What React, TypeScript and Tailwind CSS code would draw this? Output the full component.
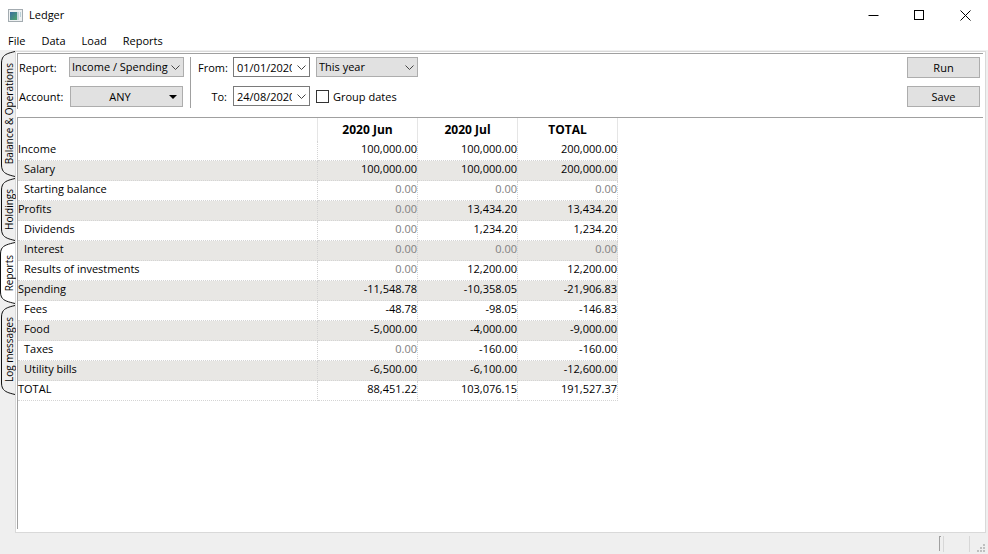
import type { ReactNode } from "react";

const MENU = ["File", "Data", "Load", "Reports"];

const TABS = [
  { label: "Balance & Operations", size: "h-[126px]", height: 126 },
  { label: "Holdings", size: "h-[63px]", height: 63 },
  { label: "Reports", size: "h-[62px]", height: 62, active: true },
  { label: "Log messages", size: "h-[90px]", height: 90 },
];

const COLUMNS = ["2020 Jun", "2020 Jul", "TOTAL"];

const ROWS = [
  { name: "Income", values: ["100,000.00", "100,000.00", "200,000.00"] },
  { name: "Salary", child: true, values: ["100,000.00", "100,000.00", "200,000.00"] },
  { name: "Starting balance", child: true, values: ["0.00", "0.00", "0.00"] },
  { name: "Profits", values: ["0.00", "13,434.20", "13,434.20"] },
  { name: "Dividends", child: true, values: ["0.00", "1,234.20", "1,234.20"] },
  { name: "Interest", child: true, values: ["0.00", "0.00", "0.00"] },
  { name: "Results of investments", child: true, values: ["0.00", "12,200.00", "12,200.00"] },
  { name: "Spending", values: ["-11,548.78", "-10,358.05", "-21,906.83"] },
  { name: "Fees", child: true, values: ["-48.78", "-98.05", "-146.83"] },
  { name: "Food", child: true, values: ["-5,000.00", "-4,000.00", "-9,000.00"] },
  { name: "Taxes", child: true, values: ["0.00", "-160.00", "-160.00"] },
  { name: "Utility bills", child: true, values: ["-6,500.00", "-6,100.00", "-12,600.00"] },
  { name: "TOTAL", values: ["88,451.22", "103,076.15", "191,527.37"] },
];

export default function App() {
  return (
    <div className="flex min-h-screen flex-col bg-[#efefef] font-['Open_Sans','Noto_Sans',sans-serif] text-[11px] leading-4 text-black">
      <TitleBar />
      <nav className="flex h-5 items-center gap-4 bg-white px-2 pt-px">
        {MENU.map((item) => (
          <button key={item} type="button">
            {item}
          </button>
        ))}
      </nav>

      <div className="flex flex-1 pt-px pr-[2px]">
        <div role="tablist" aria-orientation="vertical" className="flex w-[15px] flex-none flex-col gap-px">
          {TABS.map((tab) => (
            <SideTab key={tab.label} {...tab} />
          ))}
        </div>
        <main className="flex min-w-0 flex-1 flex-col border border-[#d9d9d9] bg-white pt-px pr-[2px] pb-[3px] pl-px">
          <Toolbar />
          <div className="mt-2 flex-1 border-t border-l border-[#a0a0a0]">
            <ReportTable />
          </div>
        </main>
      </div>

      <StatusBar />
    </div>
  );
}

function TitleBar() {
  return (
    <header className="flex h-[30px] items-center justify-between bg-white pl-2">
      <div className="flex items-center gap-[6px]">
        <AppIcon />
        <h1>Ledger</h1>
      </div>
      <div className="flex">
        <WindowButton label="Minimize">
          <path d="M0.5 5.5h10" />
        </WindowButton>
        <WindowButton label="Maximize">
          <rect x="0.5" y="0.5" width="9" height="9" />
        </WindowButton>
        <WindowButton label="Close">
          <path d="M0.5 0.5l10 10M10.5 0.5l-10 10" />
        </WindowButton>
      </div>
    </header>
  );
}

function WindowButton({ label, children }: { label: string; children: ReactNode }) {
  return (
    <button type="button" aria-label={label} className="flex h-[29px] w-[46px] items-center justify-center">
      <svg width="11" height="11" viewBox="0 0 11 11" fill="none" stroke="currentColor" strokeWidth="1">
        {children}
      </svg>
    </button>
  );
}

function Toolbar() {
  return (
    <div className="flex h-14 justify-between border-t border-l border-[#a0a0a0] pt-[3px] pr-[3px] pl-px">
      <div className="flex">
        <div className="grid grid-cols-[50px_115px] grid-rows-[21px_21px] gap-y-2 leading-[21px]">
          <label htmlFor="report">Report:</label>
          <Select id="report" value="Income / Spending" />
          <label htmlFor="account">Account:</label>
          <button
            id="account"
            type="button"
            className="mx-px flex h-[21px] items-center border border-[#adadad] bg-[#e1e1e1] pr-[5px] leading-4"
          >
            <span className="flex-1 text-center">ANY</span>
            <svg width="8" height="4" viewBox="0 0 8 4">
              <path d="M0 0h8L4 4z" />
            </svg>
          </button>
        </div>

        <div className="mr-[7px] ml-[6px] h-[51px] w-px bg-[#a0a0a0]" />

        <div className="grid grid-cols-[29px_77px_102px] grid-rows-[21px_21px] gap-x-[6px] gap-y-2 leading-[21px]">
          <label htmlFor="from" className="text-right">
            From:
          </label>
          <DateBox id="from" value="01/01/2020" />
          <Select id="period" label="Period" value="This year" />
          <label htmlFor="to" className="text-right">
            To:
          </label>
          <DateBox id="to" value="24/08/2020" />
          <label className="flex items-center gap-1">
            <input type="checkbox" className="size-[13px] appearance-none border border-[#333] bg-white checked:bg-[#333]" />
            Group dates
          </label>
        </div>
      </div>

      <div className="flex flex-col gap-2">
        {["Run", "Save"].map((label) => (
          <button key={label} type="button" className="h-[21px] w-[73px] border border-[#adadad] bg-[#e1e1e1]">
            {label}
          </button>
        ))}
      </div>
    </div>
  );
}

function Select({ id, value, label }: { id: string; value: string; label?: string }) {
  return (
    <div className="relative">
      <select
        id={id}
        aria-label={label}
        className="block h-5 w-full appearance-none border border-[#adadad] bg-[#e1e1e1] pl-[2px] leading-4"
      >
        <option>{value}</option>
      </select>
      <Chevron />
    </div>
  );
}

function DateBox({ id, value }: { id: string; value: string }) {
  return (
    <div className="relative">
      <input
        id={id}
        type="text"
        defaultValue={value}
        className="block h-5 w-full border border-[#7a7a7a] bg-white pr-[17px] pl-[3px] leading-4"
      />
      <Chevron />
    </div>
  );
}

function Chevron() {
  return (
    <svg
      className="pointer-events-none absolute top-2 right-1"
      width="9"
      height="5"
      viewBox="0 0 9 5"
      fill="none"
      stroke="#444"
    >
      <path d="M0.5 0.5l4 4 4-4" />
    </svg>
  );
}

function ReportTable() {
  return (
    <table className="w-[600px] table-fixed border-separate border-spacing-0">
      <thead>
        <tr className="h-[23px]">
          <td className="w-[300px] border-r border-[#e5e5e5] p-0" />
          {COLUMNS.map((col) => (
            <th key={col} scope="col" className="border-r border-[#e5e5e5] p-0 text-[12px] font-bold">
              {col}
            </th>
          ))}
        </tr>
      </thead>
      <tbody>
        {ROWS.map((row) => (
          <tr key={row.name} className="h-5 even:bg-[#e8e7e4]">
            <td className={`border-r border-b border-dotted border-[#d4d4d4] p-0 pb-[3px] ${row.child ? "pl-[6px]" : ""}`}>
              {row.name}
            </td>
            {row.values.map((value, i) => (
              <td
                key={i}
                className={`border-r border-b border-dotted border-[#d4d4d4] p-0 pb-[3px] text-right ${value === "0.00" ? "text-[#808080]" : ""}`}
              >
                {value}
              </td>
            ))}
          </tr>
        ))}
      </tbody>
    </table>
  );
}

type SideTabProps = { label: string; size: string; height: number; active?: boolean };

function SideTab({ label, size, height, active }: SideTabProps) {
  const left = active ? 0.5 : 1.5;
  const shape = `M15 0.5C9 2 ${left + 3} 3 ${left + 1} 7Q${left} 9 ${left} 12V${height - 12}Q${left} ${height - 9} ${left + 1} ${height - 7}C${left + 3} ${height - 3} 9 ${height - 2} 15 ${height - 0.5}`;
  return (
    <button
      type="button"
      role="tab"
      aria-selected={!!active}
      className={`relative flex w-[15px] items-center justify-center pl-[2px] text-[10px] ${size}`}
    >
      <svg className="absolute inset-0" width="15" height={height} fill={active ? "#fff" : "#efefef"} stroke="#111">
        <path d={shape} />
      </svg>
      <span className="relative rotate-180 whitespace-nowrap [writing-mode:vertical-rl]">{label}</span>
    </button>
  );
}

function StatusBar() {
  return (
    <footer className="flex h-[21px] items-center justify-end pr-[2px]">
      <div className="h-[15px] w-[2px] border-t border-l border-[#a0a0a0]" />
      <div className="ml-[2px] h-4 w-px bg-[#d7d7d7]" />
      <div className="ml-[25px] h-4 w-px bg-[#d7d7d7]" />
      <svg className="mt-[10px] ml-[7px]" width="9" height="9" viewBox="0 0 9 9" fill="#bfbfbf">
        <path d="M6 0h2v2H6zM3 3h2v2H3zM6 3h2v2H6zM0 6h2v2H0zM3 6h2v2H3zM6 6h2v2H6z" />
      </svg>
    </footer>
  );
}

function AppIcon() {
  return (
    <svg width="15" height="13" viewBox="0 0 15 13">
      <defs>
        <linearGradient id="screen" x1="0" y1="0" x2="1" y2="1">
          <stop offset="0" stopColor="#3a6ea0" />
          <stop offset="1" stopColor="#4fa56b" />
        </linearGradient>
      </defs>
      <rect x="0.5" y="0.5" width="14" height="12" fill="#eef1f2" stroke="#a3abb0" />
      <rect x="2" y="3" width="7" height="8" fill="url(#screen)" />
      <rect x="9" y="3" width="2" height="8" fill="#c3d6da" />
      <rect x="12" y="3" width="1" height="5" fill="#b9cfd6" />
    </svg>
  );
}
